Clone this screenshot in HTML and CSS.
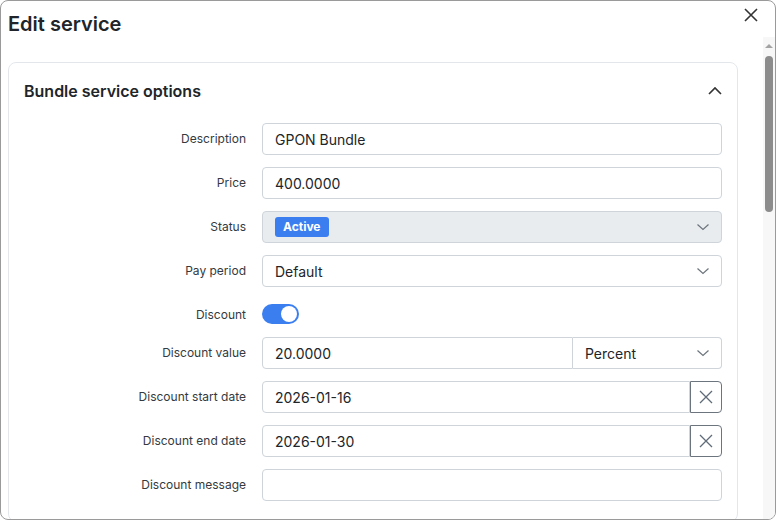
FILE: index.html
```html
<!DOCTYPE html>
<html lang="en">
  <head>
    <meta charset="utf-8" />
    <title>Edit service</title>
    <link rel="stylesheet" href="styles.css">
  </head>
  <body>
    <div class="modal">
      <div class="modal__header">
        <h1 class="modal__title">Edit service</h1>
        <span class="modal__close">
          <svg width="14" height="14" viewBox="0 0 14 14"><path d="M1 1L13 13M13 1L1 13" stroke="#333" stroke-width="1.6" fill="none"/></svg>
        </span>
      </div>
      <div class="modal__main">
        <div class="modal__body">
          <div class="card">
            <div class="card__header">
              <span class="card__title">Bundle service options</span>
              <svg width="16" height="10" viewBox="0 0 16 10"><path d="M2 8L8 2L14 8" stroke="#333" stroke-width="1.6" fill="none"/></svg>
            </div>
            <div class="card__body">
              <label class="form__label">Description</label>
              <div class="field">GPON Bundle</div>

              <label class="form__label">Price</label>
              <div class="field">400.0000</div>

              <label class="form__label">Status</label>
              <div class="field field--select field--disabled">
                <span class="badge">Active</span>
                <svg class="chevron" width="14" height="8" viewBox="0 0 14 8"><path d="M1.5 1.5L7 6.5L12.5 1.5" stroke="#6c757d" stroke-width="1.2" fill="none"/></svg>
              </div>

              <label class="form__label">Pay period</label>
              <div class="field field--select">
                <span>Default</span>
                <svg class="chevron" width="14" height="8" viewBox="0 0 14 8"><path d="M1.5 1.5L7 6.5L12.5 1.5" stroke="#6c757d" stroke-width="1.2" fill="none"/></svg>
              </div>

              <label class="form__label form__label--switch">Discount</label>
              <div class="switch-wrap">
                <span class="switch"><span class="switch__knob"></span></span>
              </div>

              <label class="form__label">Discount value</label>
              <div class="group">
                <div class="field group__main">20.0000</div>
                <div class="field field--select group__side">
                  <span>Percent</span>
                  <svg class="chevron" width="14" height="8" viewBox="0 0 14 8"><path d="M1.5 1.5L7 6.5L12.5 1.5" stroke="#6c757d" stroke-width="1.2" fill="none"/></svg>
                </div>
              </div>

              <label class="form__label">Discount start date</label>
              <div class="group">
                <div class="field group__main">2026-01-16</div>
                <span class="clear-btn">
                  <svg width="14" height="14" viewBox="0 0 14 14"><path d="M1 1L13 13M13 1L1 13" stroke="#5f6b78" stroke-width="1.3" fill="none"/></svg>
                </span>
              </div>

              <label class="form__label">Discount end date</label>
              <div class="group">
                <div class="field group__main">2026-01-30</div>
                <span class="clear-btn">
                  <svg width="14" height="14" viewBox="0 0 14 14"><path d="M1 1L13 13M13 1L1 13" stroke="#5f6b78" stroke-width="1.3" fill="none"/></svg>
                </span>
              </div>

              <label class="form__label">Discount message</label>
              <div class="field"></div>
            </div>
          </div>
        </div>
        <div class="scrollbar">
          <span class="scrollbar__arrow"></span>
          <span class="scrollbar__thumb"></span>
        </div>
      </div>
    </div>
  </body>
</html>
```

FILE: styles.css
```css
* {
	box-sizing: border-box;
}

body {
	margin: 0;
	font-family: Inter, "Liberation Sans", sans-serif;
	color: #212529;
	background: #fff;
}

.modal {
	width: 776px;
	height: 520px;
	border: 1px solid #9a9a9a;
	border-radius: 8px;
	overflow: hidden;
	display: flex;
	flex-direction: column;
	background: #fff;
}

.modal__header {
	height: 36px;
	flex: none;
	display: flex;
	align-items: center;
	justify-content: space-between;
	padding: 0 17px 0 7px;
}

.modal__title {
	margin: 0;
	font-size: 20px;
	font-weight: 600;
	line-height: 1;
	position: relative;
	top: 5px;
}

.modal__close {
	display: flex;
	position: relative;
	top: -4px;
}

.modal__main {
	flex: 1;
	display: flex;
	min-height: 0;
}

.modal__body {
	flex: 1;
	padding: 25px 25px 0 7px;
	overflow: hidden;
}

.card {
	border: 1px solid #e3e7eb;
	border-radius: 8px;
	height: 460px;
}

.card__header {
	height: 56px;
	display: flex;
	align-items: center;
	justify-content: space-between;
	padding: 0 14px 0 15px;
}

.card__title {
	font-size: 16px;
	font-weight: 600;
}

.card__body {
	display: grid;
	grid-template-columns: 222px 1fr;
	column-gap: 16px;
	row-gap: 12px;
	padding: 4px 15px 0 15px;
}

.form__label {
	font-size: 12px;
	color: #343a40;
	text-align: right;
	align-self: center;
	position: relative;
	top: -1px;
}

.form__label--switch {
	top: 2px;
}

.field {
	height: 32px;
	border: 1px solid #ced4da;
	border-radius: 4px;
	padding: 0 12px;
	display: flex;
	align-items: center;
	font-size: 14px;
	color: #212529;
}

.field--select {
	justify-content: space-between;
	padding-right: 11px;
}

.field--disabled {
	background: #e9ecef;
}

.chevron {
	flex: none;
}

.badge {
	background: #3a7ef0;
	color: #fff;
	font-size: 12px;
	font-weight: 700;
	border-radius: 3px;
	padding: 3px 8px;
	line-height: 14px;
}

.switch-wrap {
	height: 26px;
	padding-top: 5px;
}

.switch {
	display: flex;
	width: 37px;
	height: 20px;
	border-radius: 10px;
	background: #3a7ef0;
	align-items: center;
	justify-content: flex-end;
	padding: 0 2px;
}

.switch__knob {
	width: 16px;
	height: 16px;
	border-radius: 50%;
	background: #fff;
}

.group {
	display: flex;
}

.group__main {
	flex: 1;
	border-radius: 4px 0 0 4px;
}

.group__side {
	width: 149px;
	flex: none;
	border-left: none;
	border-radius: 0 4px 4px 0;
}

.clear-btn {
	width: 32px;
	height: 32px;
	flex: none;
	border: 1px solid #6c757d;
	border-radius: 0 4px 4px 0;
	display: flex;
	align-items: center;
	justify-content: center;
}

.scrollbar {
	width: 12px;
	flex: none;
	background: #f7f7f7;
	display: flex;
	flex-direction: column;
	align-items: center;
	padding-top: 7px;
}

.scrollbar__arrow {
	width: 0;
	height: 0;
	border-left: 4px solid transparent;
	border-right: 4px solid transparent;
	border-bottom: 4px solid #a3a3a3;
}

.scrollbar__thumb {
	margin-top: 8px;
	width: 8px;
	height: 156px;
	border-radius: 4px;
	background: #8c8c8c;
}
```
